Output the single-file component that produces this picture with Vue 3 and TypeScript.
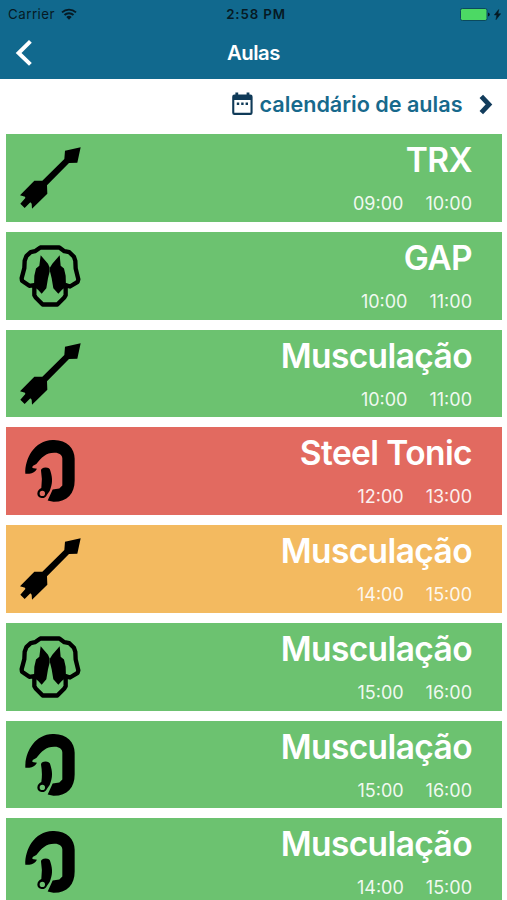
<script setup lang="ts">
type Activity = 'arrow' | 'glutes' | 'carabiner'
type Tone = 'green' | 'red' | 'orange'

interface GymClass {
  name: string
  start: string
  end: string
  icon: Activity
  tone: Tone
}

const classes: GymClass[] = [
  { name: 'TRX', start: '09:00', end: '10:00', icon: 'arrow', tone: 'green' },
  { name: 'GAP', start: '10:00', end: '11:00', icon: 'glutes', tone: 'green' },
  { name: 'Musculação', start: '10:00', end: '11:00', icon: 'arrow', tone: 'green' },
  { name: 'Steel Tonic', start: '12:00', end: '13:00', icon: 'carabiner', tone: 'red' },
  { name: 'Musculação', start: '14:00', end: '15:00', icon: 'arrow', tone: 'orange' },
  { name: 'Musculação', start: '15:00', end: '16:00', icon: 'glutes', tone: 'green' },
  { name: 'Musculação', start: '15:00', end: '16:00', icon: 'carabiner', tone: 'green' },
  { name: 'Musculação', start: '14:00', end: '15:00', icon: 'carabiner', tone: 'green' },
]
</script>

<template>
  <div class="screen">
    <header class="header">
      <div class="status">
        <div class="carrier">
          <span>Carrier</span>
          <svg class="wifi" viewBox="0 0 16 12" fill="none" stroke="#061a24" stroke-width="1.9">
            <path d="M1 4.4a10.2 10.2 0 0 1 14 0M3.5 7a6.6 6.6 0 0 1 9 0" />
            <path d="M8 11.7 5.3 9a3.9 3.9 0 0 1 5.4 0z" fill="#061a24" stroke="none" />
          </svg>
        </div>
        <span class="clock">2:58 PM</span>
        <div class="power">
          <svg class="battery" viewBox="0 0 30 13">
            <rect x=".5" y=".5" width="26.5" height="12" rx="1.8" fill="#4cd964" stroke="#0b4a5e" />
            <path d="M28 4.6q1.8.3 1.8 1.9T28 8.4z" fill="#061a24" />
          </svg>
          <svg class="bolt" viewBox="0 0 7 11"><path d="M4.7.5.3 6h2.5L2 10.7 6.700 4.700H4z" fill="#061a24" stroke="#061a24" stroke-width=".5" /></svg>
        </div>
      </div>
      <div class="nav">
        <svg class="back" viewBox="0 0 18 28" fill="none" stroke="#fff" stroke-width="4">
          <path d="M15.4 2.400 3.600 14l11.800 11.400" />
        </svg>
        <h1 class="heading">Aulas</h1>
      </div>
    </header>

    <div class="toolbar">
      <svg class="calendar" viewBox="0 0 21 24">
        <path
          fill="#0f3a58"
          fill-rule="evenodd"
          d="M3.4.5h2.8v2h8.4v-2h2.8v2h1A2.2 2.2 0 0 1 20.600 4.700v16A2.200 2.200 0 0 1 18.400 22.900h-16A2.200 2.200 0 0 1 .2 20.700v-16A2.200 2.200 0 0 1 2.400 2.500h1zM2.300 8.100v12.700h16.200V8.100z"
        />
        <path fill="#0f3a58" d="M4.800 10.600h2.400V13H4.800zM9.200 10.600h2.400V13H9.200zM13.600 10.600H16V13h-2.400z" />
      </svg>
      <span class="toolbar-label">calendário de aulas</span>
      <svg class="forward" viewBox="0 0 14 22" fill="none" stroke="#123c5c" stroke-width="4.800">
        <path d="M2.300 3.300 10 11.500 2.300 19.700" />
      </svg>
    </div>

    <main class="list">
      <article v-for="(item, index) in classes" :key="index" class="card" :class="item.tone">
        <svg v-if="item.icon === 'arrow'" class="activity" viewBox="54 42 192 200">
          <path d="M242 52 195 62 193 87 127 152 103 152 60 196 75 200 76 204 61 221 74 234 91 217 95 221 96 236 142 191 141 166 207 99 232 98z" />
        </svg>
        <svg v-else-if="item.icon === 'glutes'" class="activity" viewBox="54 41.5 192 200">
          <path
            class="outline"
            d="M121 58h57l15 11 15 3 14 14 4 12 1 23 8 32-2 8-23 14-13-4V201l-4 7-21 21H128l-21-21-4-7V171l-15 2-22-15-1-8 8-30 1-22 5-14 13-12 13-3z"
          />
          <path d="M122 81 144 107 149 118 149 130 144 150 139 180 125 197 114 185 102 176 103 143 108 121 118 113z" />
          <path d="M179 81 157 107 150 118 150 130 155 150 160 180 175 197 186 185 198 176 197 143 192 121 182 113z" />
        </svg>
        <svg v-else class="activity" viewBox="54 36.75 192 200">
          <path
            d="M76 147C74 104 102 47 158 46C199 44 224 70 224 102V167C224 207 201 232 160 231L143 227L158 194L178 191L187 182V101C187 91 177 84 165 84C139 83 125 97 109 118L98 124L97 130L111 132Q103 146 88 147z"
          />
          <path
            fill-rule="evenodd"
            d="M123 137Q123 129 137 128Q149 128 151 138C159 163 157 178 149 199L141 210Q136 221 125 220Q112 217 112 206Q113 195 124 190Q128 164 123 137zM127 198A8 8 0 1 0 127 214A8 8 0 1 0 127 198z"
          />
        </svg>
        <div class="details">
          <h2 class="name">{{ item.name }}</h2>
          <div class="times">
            <time>{{ item.start }}</time>
            <time>{{ item.end }}</time>
          </div>
        </div>
      </article>
    </main>
  </div>
</template>

<style>
body {
  margin: 0;
  background: #fff;
}
</style>

<style scoped>
.screen {
  height: 900px;
  overflow: hidden;
  background: #fff;
  font-family: Inter, "Liberation Sans", sans-serif;
}

svg {
  display: block;
  flex: none;
}

.header {
  box-sizing: border-box;
  height: 79px;
  background: #11698e;
}

.status {
  display: grid;
  grid-template-columns: 1fr auto 1fr;
  align-items: center;
  height: 28px;
  padding: 0 6px 0 8px;
  color: #061a24;
  font-size: 13.3px;
  line-height: 28px;
}

.carrier,
.power {
  display: flex;
  align-items: center;
}

.carrier {
  gap: 6px;
  letter-spacing: 0.5px;
}

.wifi {
  width: 16px;
  height: 12px;
}

.clock {
  font-weight: 600;
  letter-spacing: 0.85px;
  margin-left: 3px;
}

.power {
  justify-content: flex-end;
  gap: 4px;
}

.battery {
  width: 30px;
  height: 13px;
}

.bolt {
  width: 7px;
  height: 11px;
}

.nav {
  display: grid;
  grid-template-columns: 1fr auto 1fr;
  align-items: center;
  height: 49px;
  padding: 0 15px;
}

.back {
  width: 18px;
  height: 28px;
}

.heading {
  margin: 0;
  color: #fff;
  font-size: 20.3px;
  font-weight: 600;
  line-height: 28px;
  letter-spacing: -0.5px;
}

.toolbar {
  display: flex;
  align-items: center;
  justify-content: flex-end;
  height: 50px;
  margin-bottom: 5px;
  padding-right: 14px;
}

.calendar {
  width: 21px;
  height: 24px;
  margin-right: 7px;
}

.toolbar-label {
  color: #17698c;
  font-size: 21.6px;
  font-weight: 600;
  line-height: 28px;
}

.forward {
  width: 14px;
  height: 22px;
  margin-left: 16.5px;
}

.list {
  display: flex;
  flex-direction: column;
  gap: 10px;
  padding: 0 5px 0 6px;
}

.card {
  box-sizing: border-box;
  display: flex;
  flex: none;
  justify-content: space-between;
  height: 87.75px;
  padding: 0 30px 0 12px;
}

.green {
  background: #6cc270;
}

.red {
  background: #e26a60;
}

.orange {
  background: #f3ba60;
}

.activity {
  width: 64px;
  height: 66.67px;
  margin-top: 10px;
}

.outline {
  fill: none;
  stroke: #000;
  stroke-width: 13;
  stroke-linejoin: round;
}

.details {
  display: flex;
  flex-direction: column;
  align-items: flex-end;
  gap: 12px;
  padding-top: 6px;
  color: #fff;
}

.name {
  margin: 0;
  font-size: 33.5px;
  font-weight: 600;
  line-height: 40px;
  letter-spacing: -0.6px;
}

.times {
  display: flex;
  gap: 22px;
  font-size: 18px;
  line-height: 24px;
  opacity: 0.9;
}
</style>
